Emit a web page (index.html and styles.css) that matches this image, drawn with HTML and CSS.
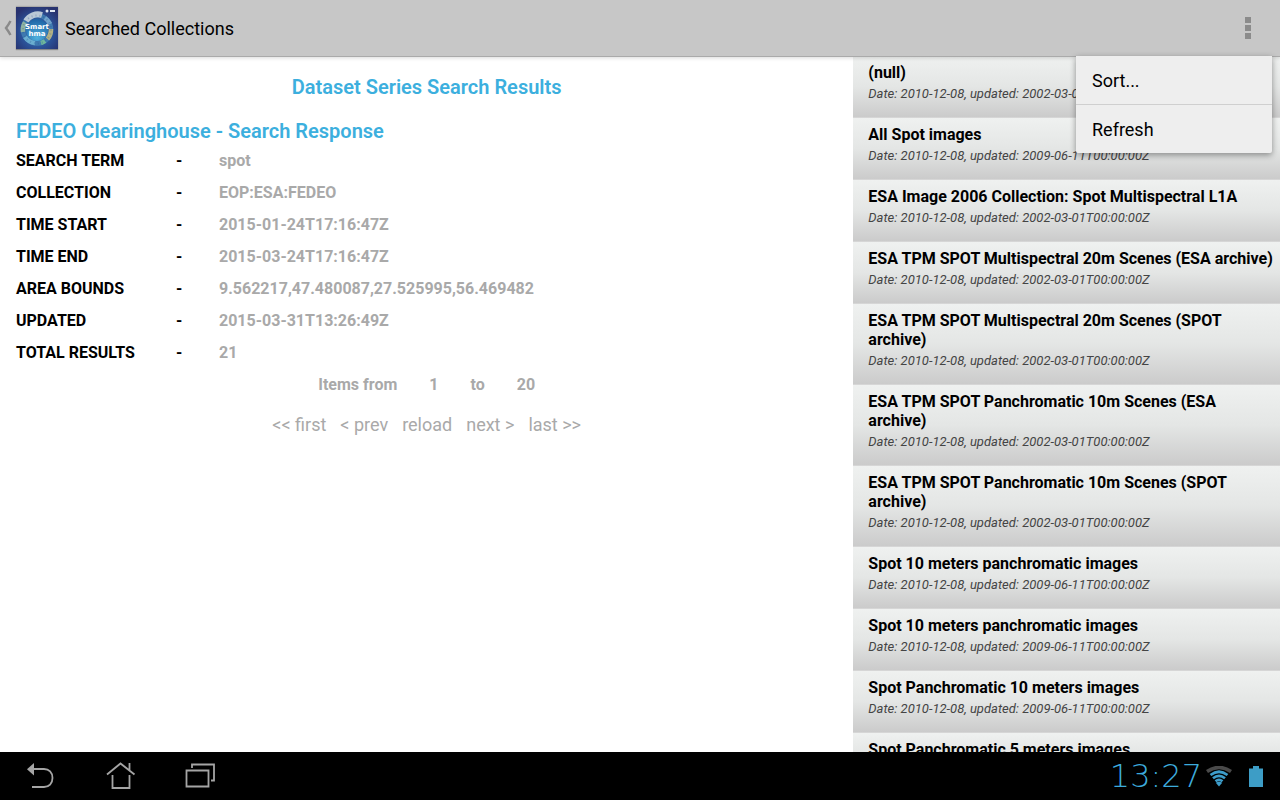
FILE: index.html
```html
<!DOCTYPE html>
<html lang="en">
<head>
<meta charset="utf-8">
<title>Searched Collections</title>
<link rel="stylesheet" href="styles.css">
</head>
<body>
<header class="action-bar">
  <a class="home-link" href="#" aria-label="Navigate up">
    <svg class="up-caret" width="8" height="16" viewBox="0 0 8 16"><path d="M6.500 1 Q5 4 2 8 Q5 12 6.500 15" fill="none" stroke="#8a8a8a" stroke-width="2.400"/></svg>
    <svg class="app-icon" width="42" height="42" viewBox="0 0 42 42">
      <defs>
        <radialGradient id="sky" cx="50%" cy="60%" r="65%"><stop offset="0" stop-color="#3e83b8"/><stop offset=".6" stop-color="#2b5096"/><stop offset="1" stop-color="#28326f"/></radialGradient>
        <radialGradient id="globe" cx="50%" cy="85%" r="80%"><stop offset="0" stop-color="#4fb0dd"/><stop offset="1" stop-color="#1f67a8"/></radialGradient>
      </defs>
      <rect width="42" height="42" fill="url(#sky)"/>
      <g fill="none" stroke-width="4.500">
        <circle cx="21" cy="22.500" r="14" stroke="#3f7ab0"/>
        <path d="M10 14 A14 14 0 0 1 26 8" stroke="#b9c8d6" stroke-width="6"/>
        <path d="M29 11 A14 14 0 0 1 34 17" stroke="#71a4cc"/>
        <path d="M7 25 A14 14 0 0 1 9 15.500" stroke="#8fb3a0"/>
        <path d="M35 22 A14 14 0 0 1 31.500 32" stroke="#b3b184"/>
        <path d="M29 34 A14 14 0 0 1 25 36" stroke="#6fb79c"/>
        <path d="M19 36 A14 14 0 0 1 9 30" stroke="#6aaed0"/>
        <circle cx="21" cy="22.500" r="14" stroke="#24508c" stroke-dasharray="1 3" stroke-width="2" opacity=".3"/>
      </g>
      <circle cx="21" cy="23" r="11" fill="url(#globe)"/>
      <text class="icon-word" x="21" y="22" text-anchor="middle">Smart</text>
      <text class="icon-word" x="21" y="29" text-anchor="middle">hma</text>
      <circle cx="31" cy="4" r="1.500" fill="#dfe6f2"/><path d="M34 4h5" stroke="#dfe6f2" stroke-width="2"/>
    </svg>
  </a>
  <h1 class="bar-title">Searched Collections</h1>
  <button class="overflow" type="button" aria-label="More options">
    <svg width="6" height="22" viewBox="0 0 6 22" fill="#8b8b8b"><path d="M0 0h6v6H0zM0 8h6v6H0zM0 16h6v6H0z"/></svg>
  </button>
  <div class="menu">
    <button class="menu-item" type="button">Sort...</button>
    <button class="menu-item" type="button">Refresh</button>
  </div>
</header>

<main class="content">
  <section class="summary">
    <h2 class="page-heading">Dataset Series Search Results</h2>
    <h3 class="source">FEDEO Clearinghouse - Search Response</h3>
    <table class="facts">
      <tr><th scope="row">SEARCH TERM</th><td class="dash">-</td><td>spot</td></tr>
      <tr><th scope="row">COLLECTION</th><td class="dash">-</td><td>EOP:ESA:FEDEO</td></tr>
      <tr><th scope="row">TIME START</th><td class="dash">-</td><td>2015-01-24T17:16:47Z</td></tr>
      <tr><th scope="row">TIME END</th><td class="dash">-</td><td>2015-03-24T17:16:47Z</td></tr>
      <tr><th scope="row">AREA BOUNDS</th><td class="dash">-</td><td>9.562217,47.480087,27.525995,56.469482</td></tr>
      <tr><th scope="row">UPDATED</th><td class="dash">-</td><td>2015-03-31T13:26:49Z</td></tr>
      <tr><th scope="row">TOTAL RESULTS</th><td class="dash">-</td><td>21</td></tr>
    </table>
    <p class="range"><span>Items from</span><span>1</span><span>to</span><span>20</span></p>
    <nav class="pager">
      <a href="#">&lt;&lt; first</a><a href="#">&lt; prev</a><a href="#">reload</a><a href="#">next &gt;</a><a href="#">last &gt;&gt;</a>
    </nav>
  </section>
  <ul class="results">
    <li class="result"><a href="#"><span class="name">(null)</span><span class="dates">Date: 2010-12-08, updated: 2002-03-01T00:00:00Z</span></a></li>
    <li class="result"><a href="#"><span class="name">All Spot images</span><span class="dates">Date: 2010-12-08, updated: 2009-06-11T00:00:00Z</span></a></li>
    <li class="result"><a href="#"><span class="name">ESA Image 2006 Collection: Spot Multispectral L1A</span><span class="dates">Date: 2010-12-08, updated: 2002-03-01T00:00:00Z</span></a></li>
    <li class="result"><a href="#"><span class="name">ESA TPM SPOT Multispectral 20m Scenes (ESA archive)</span><span class="dates">Date: 2010-12-08, updated: 2002-03-01T00:00:00Z</span></a></li>
    <li class="result"><a href="#"><span class="name">ESA TPM SPOT Multispectral 20m Scenes (SPOT archive)</span><span class="dates">Date: 2010-12-08, updated: 2002-03-01T00:00:00Z</span></a></li>
    <li class="result"><a href="#"><span class="name">ESA TPM SPOT Panchromatic 10m Scenes (ESA archive)</span><span class="dates">Date: 2010-12-08, updated: 2002-03-01T00:00:00Z</span></a></li>
    <li class="result"><a href="#"><span class="name">ESA TPM SPOT Panchromatic 10m Scenes (SPOT archive)</span><span class="dates">Date: 2010-12-08, updated: 2002-03-01T00:00:00Z</span></a></li>
    <li class="result"><a href="#"><span class="name">Spot 10 meters panchromatic images</span><span class="dates">Date: 2010-12-08, updated: 2009-06-11T00:00:00Z</span></a></li>
    <li class="result"><a href="#"><span class="name">Spot 10 meters panchromatic images</span><span class="dates">Date: 2010-12-08, updated: 2009-06-11T00:00:00Z</span></a></li>
    <li class="result"><a href="#"><span class="name">Spot Panchromatic 10 meters images</span><span class="dates">Date: 2010-12-08, updated: 2009-06-11T00:00:00Z</span></a></li>
    <li class="result"><a href="#"><span class="name">Spot Panchromatic 5 meters images</span></a></li>
  </ul>
</main>

<footer class="system-bar">
  <button class="sys-button" type="button" aria-label="Back">
    <svg width="32" height="32" viewBox="0 0 32 32"><path d="M10 9H20C25 9 28.500 12.500 28.500 18S25 27 20 27H8" fill="none" stroke="#a5a5a5" stroke-width="1.800"/><path d="M3 9.300 10 3V15.500z" fill="#a5a5a5"/></svg>
  </button>
  <button class="sys-button" type="button" aria-label="Home">
    <svg width="32" height="32" viewBox="0 0 32 32" fill="none" stroke="#a5a5a5" stroke-width="1.800"><path d="M3 14.500 16.500 3.500 30.500 14.500M25.500 10.500V3M8.500 15V28H25.500V15"/></svg>
  </button>
  <button class="sys-button" type="button" aria-label="Recent apps">
    <svg width="32" height="32" viewBox="0 0 32 32" fill="none" stroke="#a5a5a5" stroke-width="1.800"><path d="M2.500 10.500H24.500V26.500H2.500zM8 8V4.500H30V20.500H27"/></svg>
  </button>
  <div class="status">
    <time class="clock">13:27</time>
    <svg width="26" height="21" viewBox="0 0 26 21" fill="none" stroke="#3d9dca">
      <path d="M1 5.500Q13 -2.500 25 5.500" stroke="#4a4a4a" stroke-width="3.600"/>
      <path d="M4.500 9Q13 2.500 21.500 9M7 12.300Q13 7.500 19 12.300M9.500 15.300Q13 12.500 16.500 15.300" stroke-width="2.700"/>
      <path d="M13 20.500 9.800 16.800Q13 14.500 16.200 16.800z" fill="#3d9dca" stroke="none"/>
    </svg>
    <svg class="battery" width="14" height="21" viewBox="0 0 14 21" fill="#3d9dc6"><path d="M0 2.500H4V0H10V2.500H14V21H0z"/></svg>
  </div>
</footer>
</body>
</html>
```
FILE: styles.css
```css
* { box-sizing: border-box; }

body {
  margin: 0;
  height: 100vh;
  display: flex;
  flex-direction: column;
  overflow: hidden;
  background: #fff;
  color: #000;
  font-family: Roboto, "Noto Sans", sans-serif;
  font-size: 16px;
  line-height: 19px;
}

h1, h2, h3, p, ul { margin: 0; padding: 0; }
a { color: inherit; text-decoration: none; }
button { border: 0; background: none; color: inherit; font: inherit; padding: 0; }
svg { display: block; flex: none; }

.action-bar {
  position: relative;
  z-index: 1;
  flex: none;
  display: flex;
  align-items: center;
  height: 56px;
  padding: 0 16px 0 4px;
  background: #c7c7c7;
  box-shadow: 0 1px 0 #aaa, 0 2px 4px rgba(0, 0, 0, .15);
}
.home-link { display: flex; align-items: center; gap: 4px; }
.app-icon { box-shadow: 0 1px 1px #888, 0 -1px 1px #aaa; }
.icon-word { font: bold 7px "DejaVu Sans", sans-serif; fill: #fff; }
.bar-title { flex: 1; margin-left: 7px; font-size: 18px; font-weight: 400; }
.overflow { display: flex; justify-content: center; width: 32px; }

.menu {
  position: absolute;
  top: 56px;
  right: 8px;
  width: 196px;
  background: #eee;
  border-radius: 0 0 2px 2px;
  box-shadow: 0 2px 6px rgba(0, 0, 0, .4);
}
.menu-item { display: block; width: 100%; height: 48px; padding: 0 16px; font-size: 18px; text-align: left; }
.menu-item + .menu-item { height: 49px; border-top: 1px solid #cfcfcf; }

.content { flex: 1; min-height: 0; display: grid; grid-template-columns: 2fr 1fr; }

.summary { padding: 19px 0 0 16px; color: #a9a9a9; }
.page-heading { margin-right: 16px; text-align: center; }
.page-heading, .source { color: #3cafde; font-size: 20px; line-height: 24px; font-weight: 600; }
.source { margin-top: 20px; }
.facts { margin-top: 1px; border-collapse: collapse; font-weight: 700; }
.facts th, .facts td { height: 32px; padding: 0; text-align: left; }
.facts th { width: 160px; color: #000; }
.facts .dash { width: 43px; color: #000; }
.range { display: flex; justify-content: center; gap: 32px; margin: 1px 16px 0 0; line-height: 32px; font-weight: 700; }
.pager { display: flex; justify-content: center; gap: 14px; margin: 12px 16px 0 0; font-size: 18px; line-height: 24px; }

.results { list-style: none; overflow: hidden; }
.result { background: linear-gradient(#eff1f0, #e4e6e5 50%, #cbcbcb); border-bottom: 1px solid #d6d6d6; }
.result a { display: block; padding: 7px 4px 15px 15px; }
.name { display: block; font-weight: 700; }
.dates { display: block; margin-top: 4px; color: #444; font-size: 13px; line-height: 16px; font-style: italic; }

.system-bar {
  flex: none;
  display: flex;
  align-items: center;
  height: 48px;
  padding: 0 17px 0 24px;
  gap: 48px;
  background: #000;
}
.status { display: flex; align-items: center; gap: 4px; margin-left: auto; }
.clock { color: #3dabdc; font: 200 32px "DejaVu Sans", sans-serif; }
.battery { margin-left: 13px; }
```
